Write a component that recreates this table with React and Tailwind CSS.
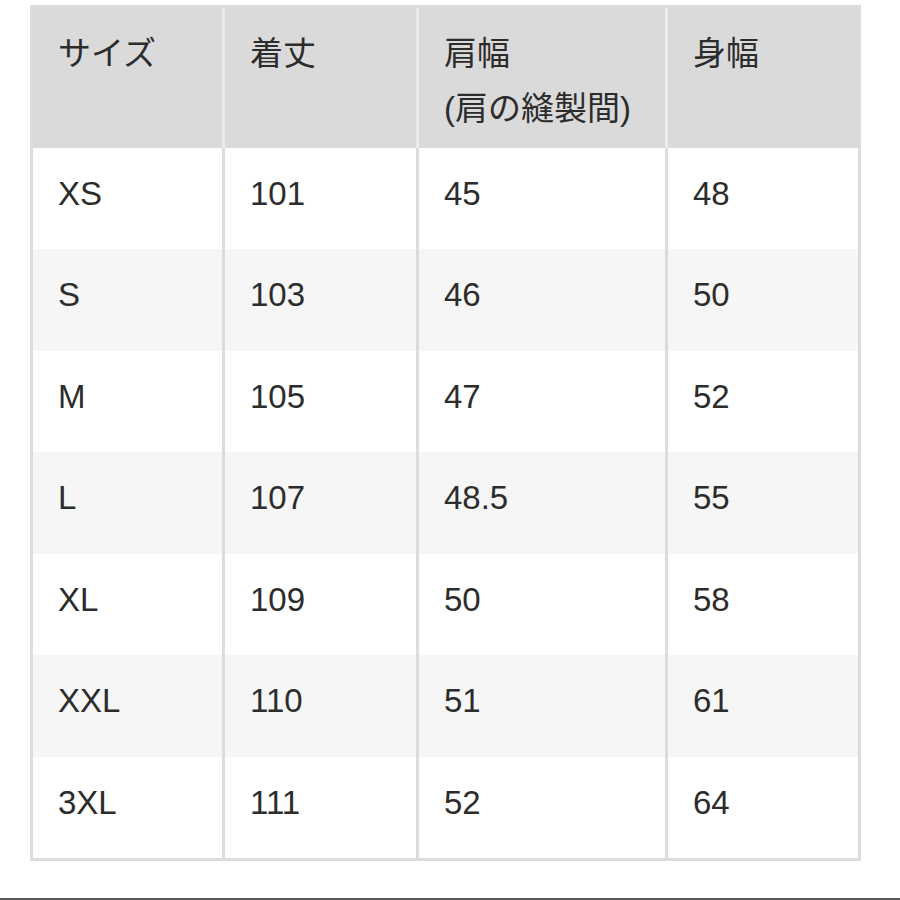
import React from 'react';

const rows = [
  ['XS', '101', '45', '48'],
  ['S', '103', '46', '50'],
  ['M', '105', '47', '52'],
  ['L', '107', '48.5', '55'],
  ['XL', '109', '50', '58'],
  ['XXL', '110', '51', '61'],
  ['3XL', '111', '52', '64'],
];

const heights = ['h-[101px]', 'h-[102px]', 'h-[101px]', 'h-[102px]', 'h-[101px]', 'h-[102px]', 'h-[101px]'];

export default function App() {
  return (
    <div
      className="w-[900px] h-[900px] bg-white flex flex-col text-[#2c2c2c] text-[33px]"
      style={{ fontFamily: '"Liberation Sans", "Noto Sans CJK JP", sans-serif' }}
    >
      <div className="ml-[30px] mt-[5px] w-[831px] border-[3px] border-[#dcdcdc]">
        <div className="grid grid-cols-[189px_194px_249px_193px] h-[140px] bg-[#dadada]">
          <div className="pl-[25px] pt-[18px] leading-[55px]">サイズ</div>
          <div className="pl-[25px] pt-[18px] leading-[55px] border-l-[3px] border-[#ececec]">着丈</div>
          <div className="pl-[25px] pt-[18px] leading-[55px] border-l-[3px] border-[#ececec]">
            肩幅
            <br />
            (肩の縫製間)
          </div>
          <div className="pl-[25px] pt-[18px] leading-[55px] border-l-[3px] border-[#ececec]">身幅</div>
        </div>
        {rows.map((r, i) => (
          <div
            key={r[0]}
            className={`grid grid-cols-[189px_194px_249px_193px] ${heights[i]} ${i % 2 === 1 ? 'bg-[#f6f6f6]' : 'bg-white'}`}
          >
            {r.map((c, j) => (
              <div
                key={j}
                className={`pl-[25px] pt-[18px] leading-[55px] ${j > 0 ? 'border-l-[3px] border-[#dcdcdc]' : ''}`}
              >
                {c}
              </div>
            ))}
          </div>
        ))}
      </div>
      <div className="flex-1" />
      <div className="h-[2px] bg-[#5a5a5a]" />
    </div>
  );
}
